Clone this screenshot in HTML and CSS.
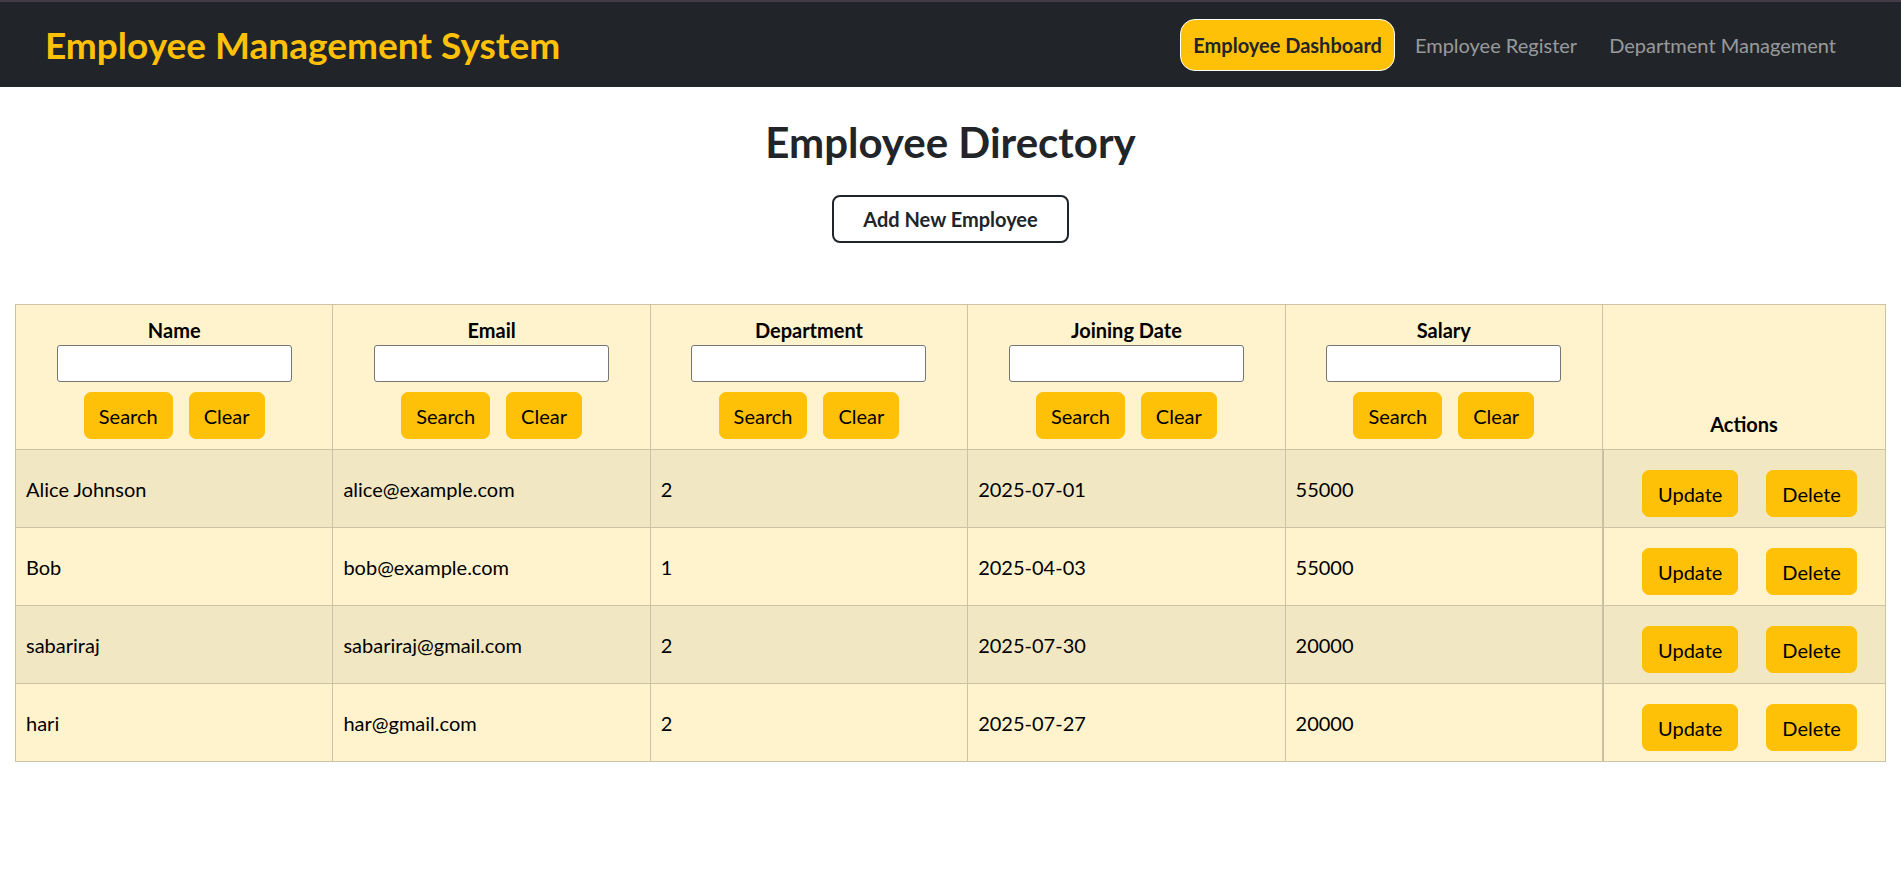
FILE: index.html
```html
<!DOCTYPE html>
<html lang="en">
<head>
<meta charset="utf-8">
<title>Employee Management System</title>
<link rel="stylesheet" href="styles.css">
</head>
<body>
<nav class="navbar">
  <div class="brand">Employee Management System</div>
  <ul class="nav-links">
    <li><a class="nav-link active" href="#">Employee Dashboard</a></li>
    <li><a class="nav-link" href="#">Employee Register</a></li>
    <li><a class="nav-link" href="#">Department Management</a></li>
  </ul>
</nav>
<main class="page">
  <h1 class="title">Employee Directory</h1>
  <div class="add-row"><button class="btn-outline">Add New Employee</button></div>
  <div class="table-wrap">
    <table class="emp-table">
      <colgroup>
        <col class="col-data"><col class="col-data"><col class="col-data"><col class="col-data"><col class="col-data"><col class="col-actions">
      </colgroup>
      <thead>
        <tr>
          <th><span class="th-label">Name</span><input class="filter-input" type="text"><div class="btn-row"><button class="btn">Search</button><button class="btn">Clear</button></div></th>
          <th><span class="th-label">Email</span><input class="filter-input" type="text"><div class="btn-row"><button class="btn">Search</button><button class="btn">Clear</button></div></th>
          <th><span class="th-label">Department</span><input class="filter-input" type="text"><div class="btn-row"><button class="btn">Search</button><button class="btn">Clear</button></div></th>
          <th><span class="th-label">Joining Date</span><input class="filter-input" type="text"><div class="btn-row"><button class="btn">Search</button><button class="btn">Clear</button></div></th>
          <th><span class="th-label">Salary</span><input class="filter-input" type="text"><div class="btn-row"><button class="btn">Search</button><button class="btn">Clear</button></div></th>
          <th class="th-actions">Actions</th>
        </tr>
      </thead>
      <tbody>
        <tr class="odd">
          <td>Alice Johnson</td><td>alice@example.com</td><td>2</td><td>2025-07-01</td><td>55000</td>
          <td class="td-actions"><div class="act-row"><button class="btn">Update</button><button class="btn">Delete</button></div></td>
        </tr>
        <tr>
          <td>Bob</td><td>bob@example.com</td><td>1</td><td>2025-04-03</td><td>55000</td>
          <td class="td-actions"><div class="act-row"><button class="btn">Update</button><button class="btn">Delete</button></div></td>
        </tr>
        <tr class="odd">
          <td>sabariraj</td><td>sabariraj@gmail.com</td><td>2</td><td>2025-07-30</td><td>20000</td>
          <td class="td-actions"><div class="act-row"><button class="btn">Update</button><button class="btn">Delete</button></div></td>
        </tr>
        <tr>
          <td>hari</td><td>har@gmail.com</td><td>2</td><td>2025-07-27</td><td>20000</td>
          <td class="td-actions"><div class="act-row"><button class="btn">Update</button><button class="btn">Delete</button></div></td>
        </tr>
      </tbody>
    </table>
  </div>
</main>
</body>
</html>
```
FILE: styles.css
```css
* { box-sizing: border-box; }
html, body { margin: 0; padding: 0; }
body {
  font-family: Lato, "Open Sans", sans-serif;
  font-size: 20px;
  line-height: 30px;
  color: #212529;
  background: #fff;
}
.navbar {
  display: flex;
  align-items: center;
  justify-content: space-between;
  height: 87px;
  border-top: 2px solid #463c48;
  background: #212529;
  padding: 0 53px 0 45px;
}
.brand {
  color: #ffc107;
  font-weight: 700;
  font-size: 37px;
  line-height: 40px;
}
.nav-links {
  list-style: none;
  display: flex;
  align-items: center;
  gap: 8px;
  margin: 0;
  padding: 0;
}
.nav-link {
  display: block;
  padding: 10px 11px;
  border: 1px solid transparent;
  border-radius: 15px;
  color: rgba(255,255,255,0.55);
  text-decoration: none;
  font-size: 20px;
  line-height: 30px;
}
.nav-link.active {
  background: #ffc107;
  border-color: #fff;
  color: #212529;
  font-weight: 700;
  padding: 10px 12px;
}
.page { padding: 0; }
.title {
  margin: 30px 0 0;
  text-align: center;
  font-size: 42px;
  line-height: 50px;
  font-weight: 700;
  color: #212529;
}
.add-row {
  display: flex;
  justify-content: center;
  margin-top: 28px;
}
.btn-outline {
  font-family: inherit;
  font-size: 20px;
  line-height: 30px;
  font-weight: 700;
  color: #212529;
  background: #fff;
  border: 2px solid #212529;
  border-radius: 8px;
  padding: 7px 29px;
}
.table-wrap {
  margin-top: 61px;
  padding: 0 15px 0 15px;
}
.emp-table {
  width: 100%;
  table-layout: fixed;
  border-collapse: collapse;
  color: #000;
}
.col-data { width: 16.97%; }
.col-actions { width: 15.13%; }
.emp-table th, .emp-table td {
  border: 1px solid #ccc2a4;
  padding: 10px;
  background: #fff3cd;
}
.emp-table th {
  text-align: center;
  vertical-align: bottom;
  font-weight: 700;
}
.th-label { display: block; }
.filter-input {
  display: block;
  width: 235px;
  height: 37px;
  margin: 0 auto 10px;
  border: 1px solid #767676;
  border-radius: 3px;
  background: #fff;
  font-family: inherit;
  font-size: 16px;
}
.btn-row {
  display: flex;
  justify-content: center;
  gap: 16px;
}
.btn {
  font-family: inherit;
  font-size: 20px;
  line-height: 30px;
  font-weight: 400;
  color: #000;
  background: #ffc107;
  border: 1px solid #ffc107;
  border-radius: 7px;
  padding: 7.5px 14px;
}
.td-actions .btn { padding: 7.5px 15px; }
.emp-table td {
  vertical-align: middle;
}
.emp-table tr.odd td { background: #f2e7c3; }
.td-actions {
  padding: 20px 10px 10px 21px !important;
  box-shadow: inset 1px 0 0 #c9bf9f;
}
.act-row {
  display: flex;
  justify-content: center;
  gap: 28px;
}
```
